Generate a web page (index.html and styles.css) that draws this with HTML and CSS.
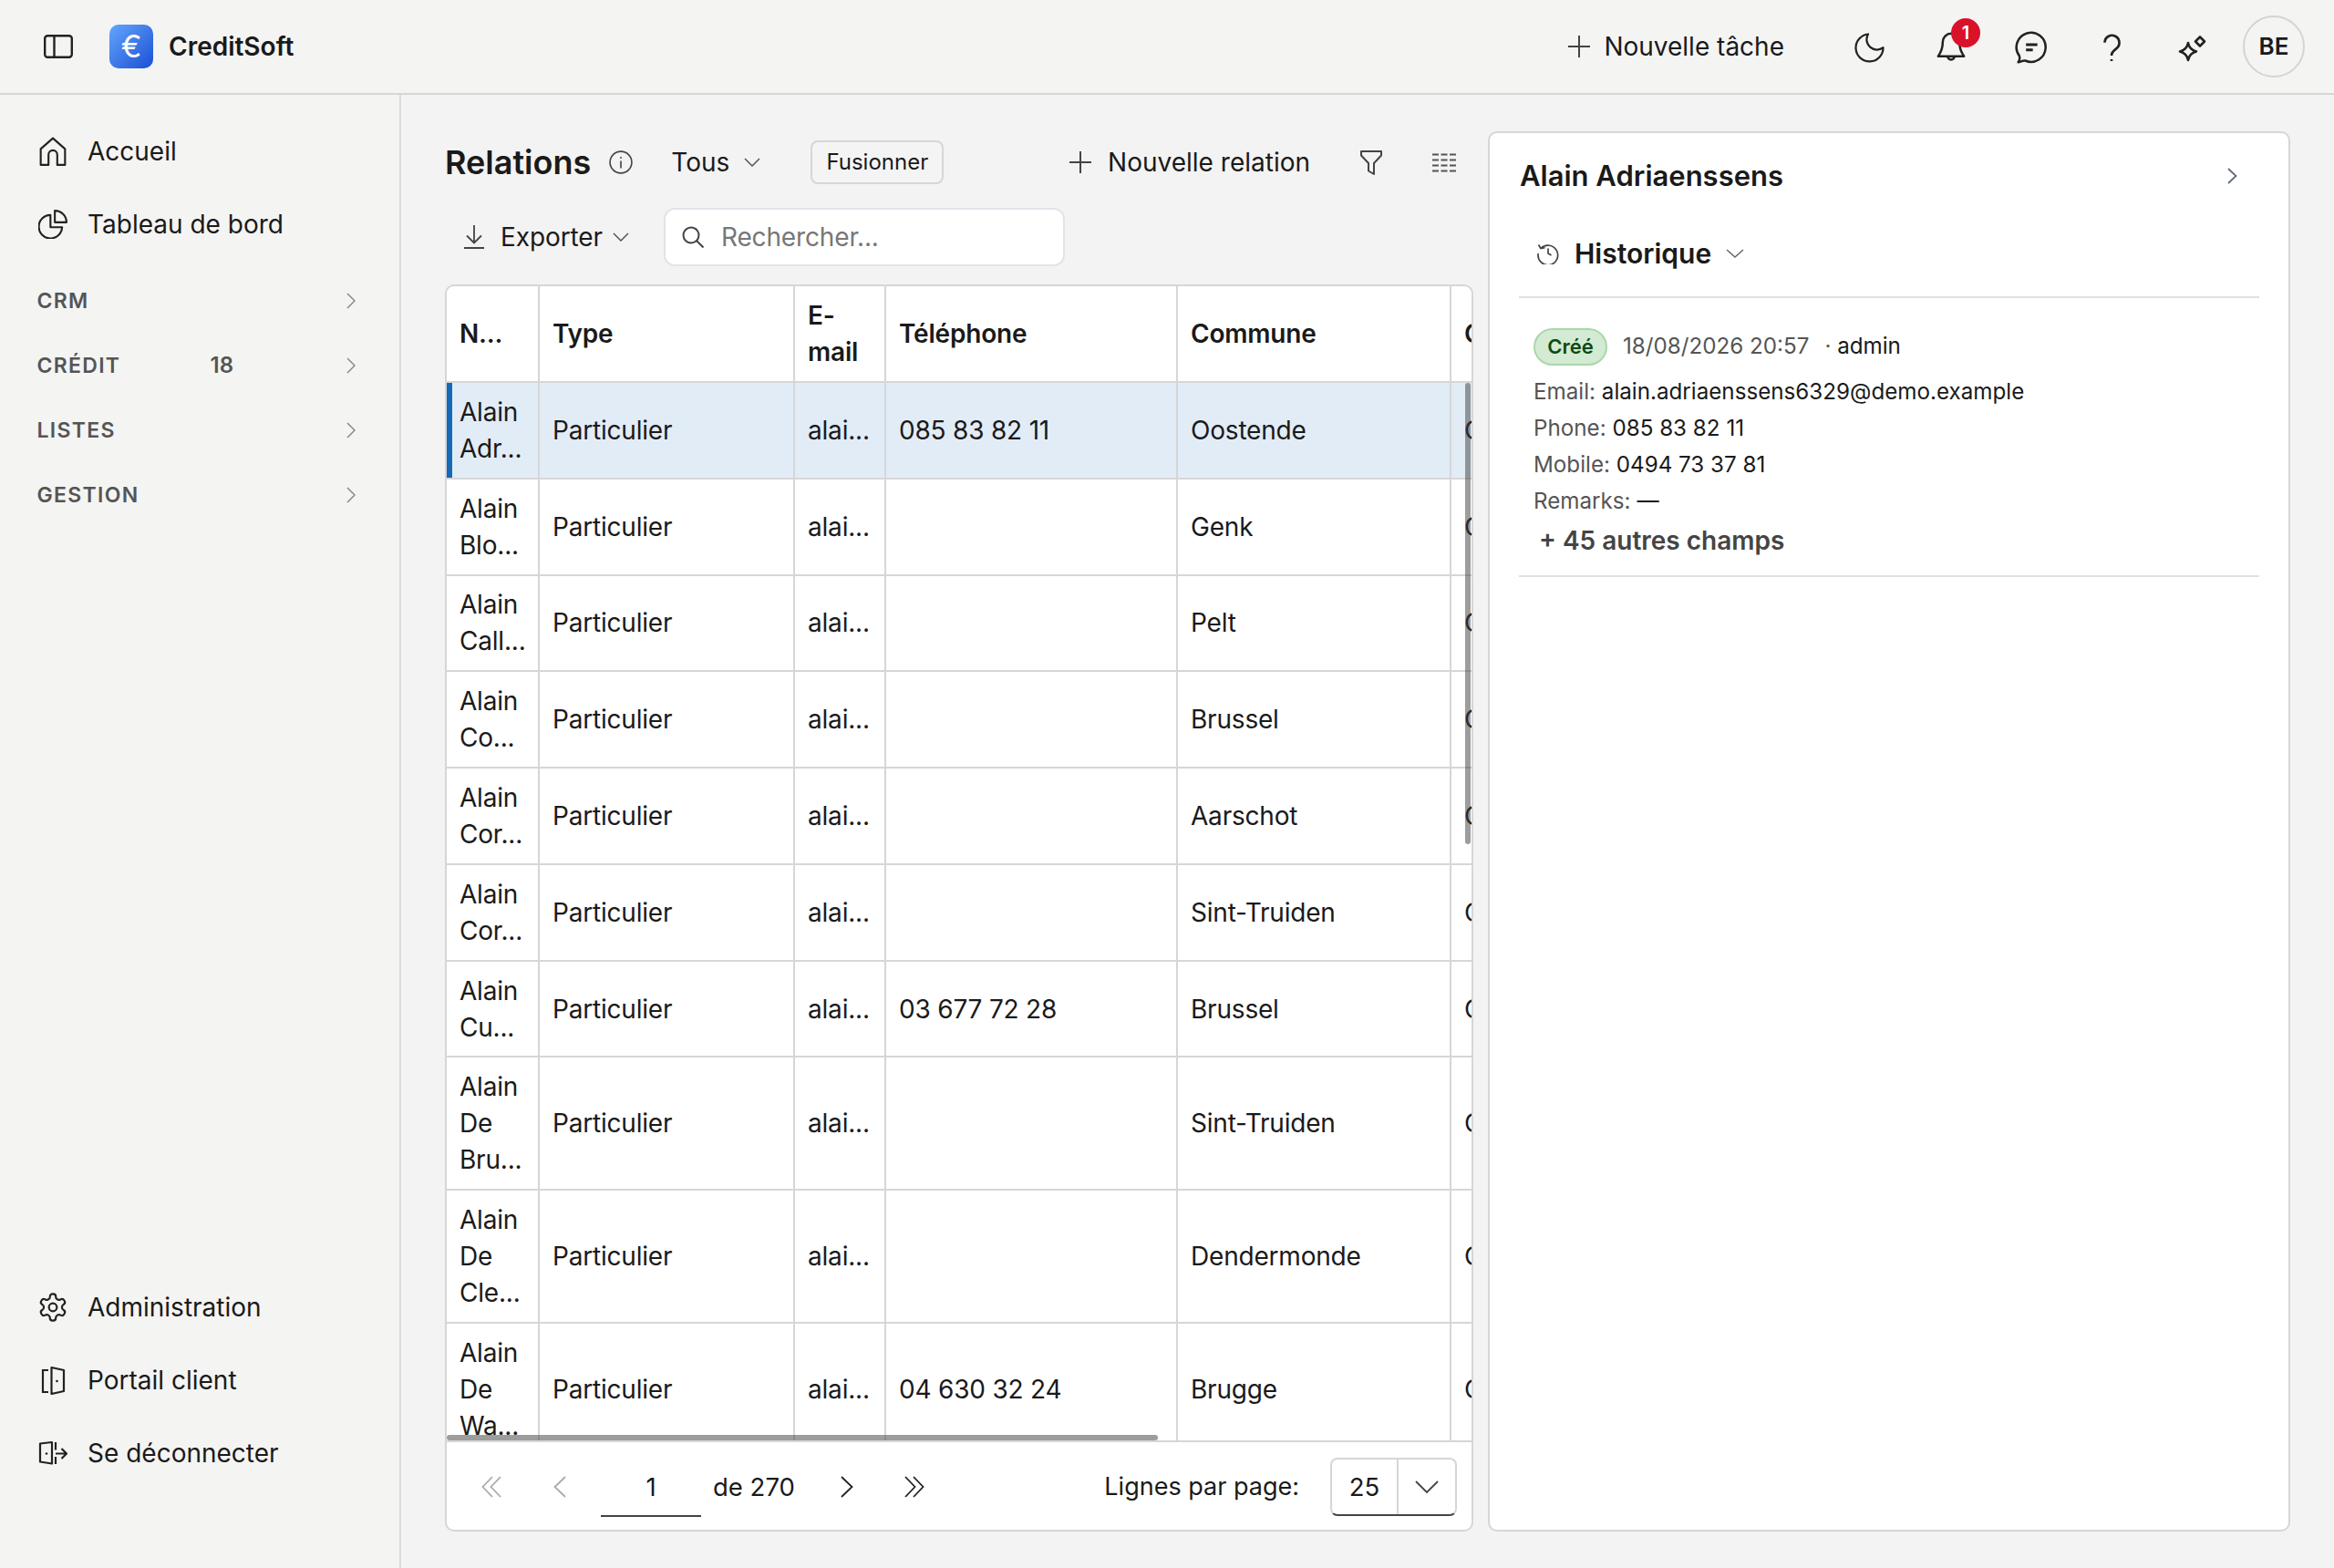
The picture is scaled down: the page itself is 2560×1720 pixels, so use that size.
FILE: index.html
```html
<!DOCTYPE html>
<html lang="fr">
<head>
    <meta charset="UTF-8">
    <meta name="viewport" content="width=device-width, initial-scale=1.0">
    <title>CreditSoft - Relations</title>
    <link rel="stylesheet" href="styles.css">
</head>
<body>
<header class="topbar">
    <svg class="toggle-icon" viewBox="0 0 32 26" fill="none" stroke="#222" stroke-width="2.4"><rect x="1.2" y="1.2" width="29.6" height="23.6" rx="3"/><path d="M11.5 1.2v23.6"/></svg>
    <div class="logo">€</div>
    <div class="brand">CreditSoft</div>
    <div class="topbar-actions">
        <div class="new-task">
            <svg class="plus-icon" viewBox="0 0 24 24" fill="none" stroke="#444" stroke-width="2"><path d="M12 0v24M0 12h24"/></svg>
            <span>Nouvelle tâche</span>
        </div>
        <svg class="moon" viewBox="0 0 24 24" fill="none" stroke="#222" stroke-width="1.5" stroke-linejoin="round"><path d="M10 3a7.500 7.500 0 0 0 11 9.800A10 10 0 1 1 10 3Z"/></svg>
        <div class="bell">
            <svg class="top-icon" viewBox="0 0 24 24" fill="none" stroke="#222" stroke-width="1.5" stroke-linejoin="round"><path d="M6.500 9a5.500 5.500 0 0 1 11 0c0 6 2.300 8 3 9.500H3.500c.7-1.500 3-3.500 3-9.500"/><path d="M9.800 18.500a2.200 2.200 0 0 0 4.400 0"/></svg>
            <span class="badge">1</span>
        </div>
        <svg class="top-icon" viewBox="0 0 24 24" fill="none" stroke="#222" stroke-width="1.5" stroke-linejoin="round"><path d="M3.400 22.400c.9-1.200 1.200-2.600.7-4.200A9.600 9.600 0 1 1 8 21.300c-1.500-.4-3 .9-4.600 1.100Z"/><path d="M8.500 10.800H16M8.500 14.200H13" stroke-width="1.800"/></svg>
        <svg class="top-icon" viewBox="0 0 24 24" fill="none" stroke="#222" stroke-width="1.6"><path d="M7.500 9.500a4.800 4.800 0 1 1 7.600 3.900c-1.800 1.300-3.100 2.300-3.100 4.600"/><path d="M12 20.400v1.200"/></svg>
        <svg class="spark-icon" viewBox="0 0 40 40" fill="none" stroke="#222" stroke-width="2.600" stroke-linejoin="round"><path d="M16 16c1 5.500 3.500 8 9 9.500-5.500 1.500-8 4-9 9.500-1-5.500-3.500-8-9-9.500 5.500-1.500 8-4 9-9.500Z"/><path d="m29 9.500 5 5-5 5-5-5Z"/></svg>
        <div class="avatar">BE</div>
    </div>
</header>

<div class="layout">
    <aside class="sidebar">
        <nav class="nav-group">
            <div class="nav-item">
                <svg class="nav-icon" viewBox="0 0 30 30" fill="none" stroke="#222" stroke-width="2" stroke-linejoin="round"><path d="M2.500 12.500 15 1.500l12.500 11V29h-8V18.500a4.500 4.500 0 0 0-9 0V29h-8Z"/></svg>
                <span>Accueil</span>
            </div>
            <div class="nav-item">
                <svg class="nav-icon" viewBox="0 0 30 30" fill="none" stroke="#222" stroke-width="2" stroke-linejoin="round"><path d="M12.500 5.500A12 12 0 1 0 24.500 18H12.500Z"/><path d="M17 1a12 12 0 0 1 12 12H17Z"/></svg>
                <span>Tableau de bord</span>
            </div>
        </nav>
        <div class="section"><span>CRM</span><span></span><svg class="section-chevron" viewBox="0 0 10 18" fill="none" stroke="#888" stroke-width="1.500"><path d="m1 1 8 8-8 8"/></svg></div>
        <div class="section"><span>CRÉDIT</span><span class="count">18</span><svg class="section-chevron" viewBox="0 0 10 18" fill="none" stroke="#888" stroke-width="1.500"><path d="m1 1 8 8-8 8"/></svg></div>
        <div class="section"><span>LISTES</span><span></span><svg class="section-chevron" viewBox="0 0 10 18" fill="none" stroke="#888" stroke-width="1.500"><path d="m1 1 8 8-8 8"/></svg></div>
        <div class="section"><span>GESTION</span><span></span><svg class="section-chevron" viewBox="0 0 10 18" fill="none" stroke="#888" stroke-width="1.500"><path d="m1 1 8 8-8 8"/></svg></div>
        <nav class="nav-group nav-bottom">
            <div class="nav-item">
                <svg class="nav-icon" viewBox="1 1 22 22" fill="none" stroke="#222" stroke-width="1.500"><path d="M12.220 2h-.44a2 2 0 0 0-2 2v.18a2 2 0 0 1-1 1.730l-.43.25a2 2 0 0 1-2 0l-.15-.08a2 2 0 0 0-2.730.73l-.22.38a2 2 0 0 0 .73 2.730l.15.1a2 2 0 0 1 1 1.720v.51a2 2 0 0 1-1 1.740l-.15.09a2 2 0 0 0-.73 2.730l.22.38a2 2 0 0 0 2.730.73l.15-.08a2 2 0 0 1 2 0l.43.25a2 2 0 0 1 1 1.730V20a2 2 0 0 0 2 2h.44a2 2 0 0 0 2-2v-.18a2 2 0 0 1 1-1.730l.43-.25a2 2 0 0 1 2 0l.15.08a2 2 0 0 0 2.730-.73l.22-.39a2 2 0 0 0-.73-2.730l-.15-.08a2 2 0 0 1-1-1.740v-.5a2 2 0 0 1 1-1.740l.15-.09a2 2 0 0 0 .73-2.730l-.22-.38a2 2 0 0 0-2.730-.73l-.15.08a2 2 0 0 1-2 0l-.43-.25a2 2 0 0 1-1-1.730V4a2 2 0 0 0-2-2z"/><circle cx="12" cy="12" r="3"/></svg>
                <span>Administration</span>
            </div>
            <div class="nav-item">
                <svg class="nav-icon" viewBox="0 0 32 32" fill="none" stroke="#222" stroke-width="2.200"><path d="M11 5H5v24h6"/><path d="m14.500 2 13.500 3v23l-13.500 3Z" stroke-linejoin="round"/><circle cx="20.500" cy="17" r="1.300" fill="#222" stroke="none"/></svg>
                <span>Portail client</span>
            </div>
            <div class="nav-item">
                <svg class="nav-icon" viewBox="0 0 32 32" fill="none" stroke="#222" stroke-width="2.200"><path d="M15 4 2 5.500v20L15 27.500Z" stroke-linejoin="round"/><circle cx="9" cy="16.500" r="1.300" fill="#222" stroke="none"/><path d="M19 4v8.500M19 20v8M19 16.500h12M25.500 11l5.500 5.500-5.500 5.500"/></svg>
                <span>Se déconnecter</span>
            </div>
        </nav>
    </aside>

    <main class="content">
        <section class="list-pane">
            <div class="toolbar">
                <h1 class="page-title">Relations</h1>
                <svg class="info-icon" viewBox="0 0 24 24" fill="none" stroke="#444" stroke-width="1.500"><circle cx="12" cy="12" r="11"/><path d="M12 10.500V18M12 6.500v1.500"/></svg>
                <span class="tous">Tous</span>
                <svg class="chevron-down" viewBox="0 0 18 10" fill="none" stroke="#555" stroke-width="1.500"><path d="m1 1 8 8 8-8"/></svg>
                <button class="merge-btn">Fusionner</button>
                <div class="toolbar-right">
                    <svg class="plus-icon" viewBox="0 0 24 24" fill="none" stroke="#444" stroke-width="2"><path d="M12 0v24M0 12h24"/></svg>
                    <span class="new-relation">Nouvelle relation</span>
                    <svg class="filter-icon" viewBox="0 0 24 27" fill="none" stroke="#444" stroke-width="2" stroke-linejoin="round"><path d="M1 1h22v4.500l-8 8.500v12l-6-3.500V14L1 5.500Z"/></svg>
                    <svg class="columns-icon" viewBox="0 0 27 21" fill="none" stroke="#555" stroke-width="2" stroke-dasharray="7 2.500"><path d="M0 1.500h27M0 7.500h27M0 13.500h27M0 19.500h27"/></svg>
                </div>
            </div>
            <div class="toolbar-second">
                <svg class="export-icon" viewBox="0 0 22 26" fill="none" stroke="#444" stroke-width="1.800"><path d="M11 0v19M3 11.500l8 8 8-8M0 25h22"/></svg>
                <span class="export-label">Exporter</span>
                <svg class="chevron-down" viewBox="0 0 18 10" fill="none" stroke="#555" stroke-width="1.500"><path d="m1 1 8 8 8-8"/></svg>
                <div class="search">
                    <svg class="search-icon" viewBox="0 0 24 24" fill="none" stroke="#444" stroke-width="2"><circle cx="10" cy="10" r="8.500"/><path d="m16 16 7.500 7.500"/></svg>
                    <span class="search-text">Rechercher...</span>
                </div>
            </div>

            <div class="table-card">
                <div class="table-scroll">
                    <table class="relations">
                        <colgroup>
                            <col class="col-name"><col class="col-type"><col class="col-mail"><col class="col-phone"><col class="col-city"><col class="col-more">
                        </colgroup>
                        <thead>
                            <tr><th>N...</th><th>Type</th><th>E-<br>mail</th><th>Téléphone</th><th>Commune</th><th>Code postal</th></tr>
                        </thead>
                        <tbody>
                            <tr class="selected"><td>Alain<br>Adr...</td><td>Particulier</td><td>alai...</td><td>085 83 82 11</td><td>Oostende</td><td>Client</td></tr>
                            <tr><td>Alain<br>Blo...</td><td>Particulier</td><td>alai...</td><td></td><td>Genk</td><td>Client</td></tr>
                            <tr><td>Alain<br>Call...</td><td>Particulier</td><td>alai...</td><td></td><td>Pelt</td><td>Client</td></tr>
                            <tr><td>Alain<br>Co...</td><td>Particulier</td><td>alai...</td><td></td><td>Brussel</td><td>Client</td></tr>
                            <tr><td>Alain<br>Cor...</td><td>Particulier</td><td>alai...</td><td></td><td>Aarschot</td><td>Client</td></tr>
                            <tr><td>Alain<br>Cor...</td><td>Particulier</td><td>alai...</td><td></td><td>Sint-Truiden</td><td>Client</td></tr>
                            <tr><td>Alain<br>Cu...</td><td>Particulier</td><td>alai...</td><td>03 677 72 28</td><td>Brussel</td><td>Client</td></tr>
                            <tr><td>Alain<br>De<br>Bru...</td><td>Particulier</td><td>alai...</td><td></td><td>Sint-Truiden</td><td>Client</td></tr>
                            <tr><td>Alain<br>De<br>Cle...</td><td>Particulier</td><td>alai...</td><td></td><td>Dendermonde</td><td>Client</td></tr>
                            <tr><td>Alain<br>De<br>Wa...</td><td>Particulier</td><td>alai...</td><td>04 630 32 24</td><td>Brugge</td><td>Client</td></tr>
                        </tbody>
                    </table>
                    <div class="scroll-v"></div>
                    <div class="scroll-h"></div>
                </div>
                <footer class="pager">
                    <svg class="pager-double" viewBox="0 0 22 24" fill="none" stroke="#aaa" stroke-width="1.800"><path d="M12 1 1.500 12 12 23M21 1 10.500 12 21 23"/></svg>
                    <svg class="pager-single prev" viewBox="0 0 14 24" fill="none" stroke="#aaa" stroke-width="1.800"><path d="M13 1 1.500 12 13 23"/></svg>
                    <div class="page-input">1</div>
                    <span class="page-total">de 270</span>
                    <svg class="pager-single next" viewBox="0 0 14 24" fill="none" stroke="#222" stroke-width="1.800"><path d="m1 1 11.500 11L1 23"/></svg>
                    <svg class="pager-double last" viewBox="0 0 22 24" fill="none" stroke="#222" stroke-width="1.800"><path d="M1 1l10.500 11L1 23M10 1l10.500 11L10 23"/></svg>
                    <span class="rows-label">Lignes par page:</span>
                    <div class="rows-select">
                        <span class="rows-value">25</span>
                        <span class="rows-arrow"><svg viewBox="0 0 26 14" fill="none" stroke="#444" stroke-width="1.800"><path d="m1 1 12 12L25 1"/></svg></span>
                    </div>
                </footer>
            </div>
        </section>

        <section class="detail-pane">
            <div class="detail-head">
                <h2 class="detail-title">Alain Adriaenssens</h2>
                <svg class="detail-chevron" viewBox="0 0 11 18" fill="none" stroke="#5f6b7a" stroke-width="1.800"><path d="m1 1 8.500 8L1 17"/></svg>
            </div>
            <div class="history-head">
                <svg class="clock-icon" viewBox="0 0 24 24" fill="none" stroke="#444" stroke-width="1.700"><path d="M4 6.500A10.800 10.800 0 1 1 1.200 12"/><path d="M1.500 2.500 4 6.500l4.500-.800M12 6.500V12l3.500 2"/></svg>
                <span class="history-title">Historique</span>
                <svg class="history-chevron" viewBox="0 0 20 10" fill="none" stroke="#666" stroke-width="1.500"><path d="m1 1 9 8 9-8"/></svg>
            </div>
            <article class="history-entry">
                <div class="entry-top">
                    <span class="tag">Créé</span>
                    <span class="entry-date">18/08/2026 20:57</span>
                    <span class="entry-user"><span class="entry-dot">·</span> admin</span>
                </div>
                <div class="entry-line"><span class="entry-key">Email:</span> alain.adriaenssens6329@demo.example</div>
                <div class="entry-line"><span class="entry-key">Phone:</span> 085 83 82 11</div>
                <div class="entry-line"><span class="entry-key">Mobile:</span> 0494 73 37 81</div>
                <div class="entry-line"><span class="entry-key">Remarks:</span> —</div>
                <div class="entry-more">+ 45 autres champs</div>
            </article>
        </section>
    </main>
</div>
</body>
</html>
```
FILE: styles.css
```css
* { box-sizing: border-box; }
html, body { margin: 0; height: 100%; }
body { font-family: Inter, "Noto Sans", sans-serif; font-size: 28px; line-height: 40px; color: #1a1a1a; background: #f3f3f3; overflow: hidden; }
svg { display: block; flex: none; }

/* top bar */
.topbar { height: 104px; display: flex; align-items: center; background: #f4f4f3; border-bottom: 2px solid #d6d6d6; padding-left: 48px; }
.toggle-icon { width: 32px; height: 26px; }
.logo { width: 48px; height: 48px; margin-left: 40px; border-radius: 10px; background: linear-gradient(135deg, #64a6fb, #1b4fd6); color: #fff; font-size: 34px; display: flex; align-items: center; justify-content: center; }
.brand { margin-left: 17px; font-weight: 600; }
.topbar-actions { margin-left: auto; display: flex; align-items: center; padding-right: 32px; }
.new-task { display: flex; align-items: center; gap: 15px; margin-right: 77px; }
.plus-icon { width: 24px; height: 24px; }
.moon { width: 36px; height: 36px; margin-right: 50px; }
.top-icon { width: 40px; height: 40px; margin-right: 48px; }
.spark-icon { width: 40px; height: 40px; margin-right: 38px; }
.bell { position: relative; }
.badge { position: absolute; left: 20px; top: -11px; width: 32px; height: 32px; border-radius: 50%; background: #d9122a; color: #fff; font-size: 20px; line-height: 32px; font-weight: 600; text-align: center; }
.avatar { width: 68px; height: 68px; margin-left: -2px; border: 2px solid #d4d4d4; border-radius: 50%; display: flex; align-items: center; justify-content: center; font-size: 26px; font-weight: 600; }

/* layout */
.layout { display: flex; height: 1616px; }

/* sidebar */
.sidebar { width: 440px; flex: none; display: flex; flex-direction: column; background: #f4f4f3; border-right: 2px solid #dcdcdc; padding: 22px 0 86px; }
.nav-item { height: 80px; display: flex; align-items: center; padding-left: 42px; gap: 22px; }
.nav-icon { width: 32px; height: 32px; }
.section { height: 71px; display: grid; grid-template-columns: 190px 1fr auto; align-items: center; padding: 0 48px 0 40.5px; font-size: 23px; font-weight: 600; letter-spacing: 1.3px; color: #555; }
.section:first-of-type { margin-top: 8px; }
.count { font-size: 24px; letter-spacing: 0; }
.section-chevron { width: 10px; height: 18px; }
.nav-bottom { margin-top: auto; }

/* main area */
.content { flex: 1; display: flex; gap: 16px; padding: 40px 48px; min-width: 0; }
.list-pane { width: 1128px; flex: none; display: flex; flex-direction: column; }

.toolbar { height: 48px; margin-top: 10px; display: flex; align-items: center; }
.page-title { margin: 0; font-size: 36px; font-weight: 600; }
.info-icon { width: 26px; height: 26px; margin-left: 20px; }
.tous { margin-left: 42px; }
.toolbar .chevron-down { margin-left: 16px; }
.chevron-down { width: 18px; height: 10px; }
.merge-btn { margin-left: 55px; width: 146px; height: 48px; padding: 0; border: 2px solid #d6d6d6; border-radius: 8px; background: #f4f4f4; font: inherit; font-size: 24px; color: #1a1a1a; }
.toolbar-right { margin-left: auto; display: flex; align-items: center; padding-right: 18px; }
.new-relation { margin-left: 18px; }
.filter-icon { width: 24px; height: 27px; margin-left: 55px; }
.columns-icon { width: 27px; height: 21px; margin-left: 55px; }

.toolbar-second { height: 64px; margin-top: 26px; display: flex; align-items: center; padding-left: 21px; }
.export-icon { width: 22px; height: 26px; }
.export-label { margin-left: 18px; letter-spacing: -0.1px; }
.toolbar-second .chevron-down { margin-left: 11px; }
.search { margin-left: 38px; width: 440px; height: 64px; display: flex; align-items: center; background: #fff; border: 2px solid #e0e4ea; border-radius: 12px; padding-left: 18px; }
.search-icon { width: 24px; height: 24px; }
.search-text { margin-left: 19px; color: #777; letter-spacing: -0.15px; }

/* table */
.table-card { flex: 1; min-height: 0; margin-top: 20px; display: flex; flex-direction: column; background: #fff; border: 2px solid #d6d6d6; border-radius: 10px; overflow: hidden; }
.table-scroll { position: relative; flex: 1; min-height: 0; overflow: hidden; }
.relations { width: 1303px; table-layout: fixed; border-collapse: separate; border-spacing: 0; letter-spacing: -0.2px; }
.col-name { width: 102px; }
.col-type { width: 280px; }
.col-mail { width: 100px; }
.col-phone { width: 320px; }
.col-city { width: 300px; }
.col-more { width: 201px; }
.relations th, .relations td { padding: 11.9px 14px; border-right: 2px solid #d6d6d6; border-bottom: 2px solid #d6d6d6; text-align: left; font-weight: 400; white-space: nowrap; overflow: hidden; }
.relations th { padding-top: 12px; padding-bottom: 12px; font-weight: 600; }
.selected td { background: #e2ecf7; }
.selected td:first-child { box-shadow: inset 6px 0 0 #1469b9; }
.scroll-v { position: absolute; right: 1px; top: 106px; width: 6px; height: 506px; border-radius: 3px; background: rgba(60, 60, 60, 0.5); }
.scroll-h { position: absolute; left: 0; bottom: 0; width: 780px; height: 6px; border-radius: 3px; background: rgba(60, 60, 60, 0.5); }

/* pagination */
.pager { height: 98px; flex: none; display: flex; align-items: center; border-top: 2px solid #d6d6d6; padding: 2px 0 0 38px; font-size: 27.5px; }
.pager-double { width: 22px; height: 24px; }
.pager-single { width: 14px; height: 24px; }
.prev { margin-left: 57px; }
.page-input { margin-left: 38px; width: 110px; height: 62px; margin-top: 4px; line-height: 58px; text-align: center; border-bottom: 2px solid #444; }
.page-total { margin-left: 13px; }
.next { margin-left: 50px; }
.last { margin-left: 56px; }
.rows-label { margin-left: auto; font-size: 27px; }
.rows-select { margin: 0 16px 0 34px; width: 139px; height: 64px; display: flex; border: 2px solid #d6d6d6; border-bottom-color: #444; border-radius: 8px; }
.rows-value { width: 73px; text-align: center; line-height: 60px; border-right: 2px solid #d6d6d6; }
.rows-arrow { flex: 1; display: flex; align-items: center; justify-content: center; }
.rows-arrow svg { width: 26px; height: 14px; }

/* detail panel */
.detail-pane { flex: 1; background: #fff; border: 2px solid #d6d6d6; border-radius: 10px; padding: 0 32px; min-width: 0; }
.detail-head { height: 93px; display: flex; align-items: center; justify-content: space-between; padding: 0 24px 0 1px; }
.detail-title { margin: 0; font-size: 31px; font-weight: 600; }
.detail-chevron { width: 11px; height: 18px; }
.history-head { height: 88px; display: flex; align-items: center; padding: 0 0 8px 20px; border-bottom: 2px solid #dde1e6; }
.clock-icon { width: 24px; height: 24px; }
.history-title { margin-left: 17px; font-size: 30px; font-weight: 600; }
.history-chevron { width: 20px; height: 10px; margin-left: 16px; }
.history-entry { padding: 32px 0 18px 16px; border-bottom: 2px solid #dde1e6; font-size: 24.2px; }
.entry-top { display: flex; align-items: center; height: 42px; margin-bottom: 9px; }
.tag { width: 81px; height: 41px; display: flex; align-items: center; justify-content: center; background: #d3ead3; border: 2px solid #a8d8aa; border-radius: 21px; color: #0d4a12; font-size: 22px; font-weight: 600; }
.entry-date { margin-left: 17px; color: #555; }
.entry-user { margin-left: 17px; }
.entry-dot { color: #555; }
.entry-line { height: 40px; }
.entry-key { color: #555; }
.entry-more { margin: 3px 0 0 6px; font-size: 28px; font-weight: 600; color: #444; }
```
